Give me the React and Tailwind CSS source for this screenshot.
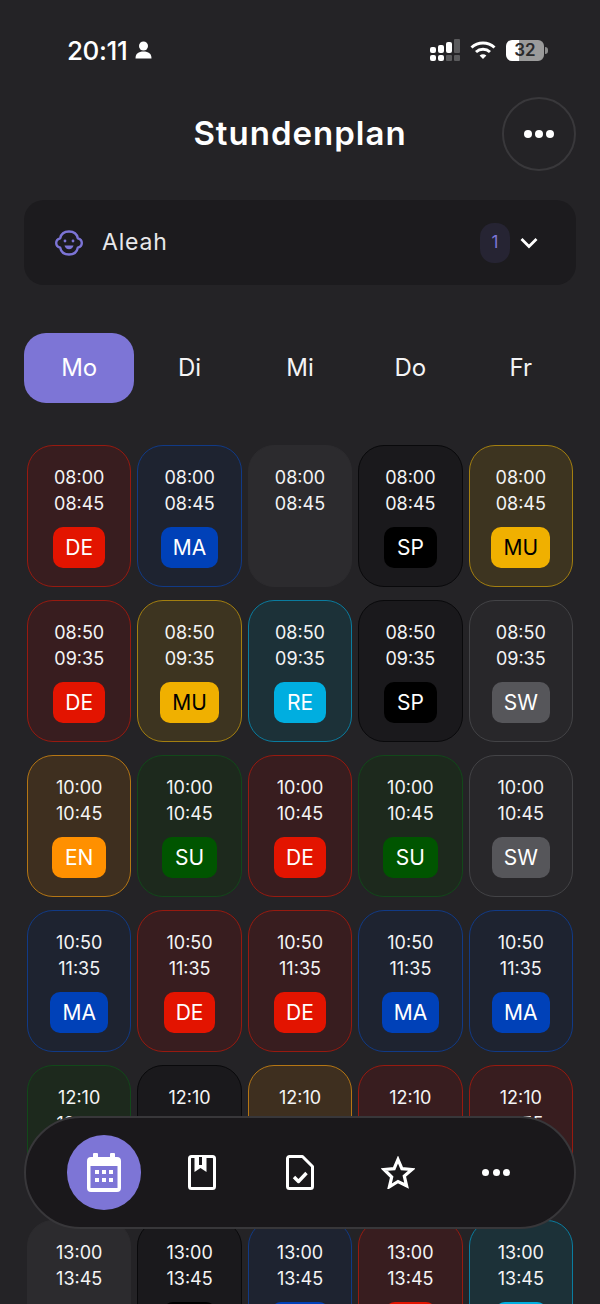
import React from "react";

const SUBJECTS = {
  DE: { card: "bg-[#381d1f] border-[#971a10]", badge: "bg-[#e31400] text-white px-[12px]" },
  MA: { card: "bg-[#1e2330] border-[#113a86]", badge: "bg-[#0041b8] text-white px-[12px]" },
  MU: { card: "bg-[#3d3420] border-[#a37f10]", badge: "bg-[#f0b000] text-black px-[12px]" },
  RE: { card: "bg-[#1c3138] border-[#0a7c9f]", badge: "bg-[#00aee0] text-white px-[13px]" },
  SP: { card: "bg-[#1a191c] border-[#09090b]", badge: "bg-black text-white px-[13px]" },
  SW: { card: "bg-[#28272a] border-[#434346]", badge: "bg-[#56565a] text-white px-[12px]" },
  EN: { card: "bg-[#3e2f1f] border-[#b57614]", badge: "bg-[#ff9000] text-white px-[13px]" },
  SU: { card: "bg-[#1d291d] border-[#12481a]", badge: "bg-[#005500] text-white px-[13px]" },
};

const ROWS = [
  { from: "08:00", to: "08:45", subjects: ["DE", "MA", null, "SP", "MU"] },
  { from: "08:50", to: "09:35", subjects: ["DE", "MU", "RE", "SP", "SW"] },
  { from: "10:00", to: "10:45", subjects: ["EN", "SU", "DE", "SU", "SW"] },
  { from: "10:50", to: "11:35", subjects: ["MA", "DE", "DE", "MA", "MA"] },
  { from: "12:10", to: "12:55", subjects: ["SU", "SP", "EN", "DE", "DE"] },
  { from: "13:00", to: "13:45", subjects: [null, "SP", "MA", "DE", "RE"] },
];

const DAYS = ["Mo", "Di", "Mi", "Do", "Fr"];

function LessonCard({ from, to, subject }) {
  const style = subject ? SUBJECTS[subject] : null;
  return (
    <div
      className={`h-[142px] rounded-[26px] border pt-[19px] flex flex-col items-center ${
        style ? style.card : "bg-[#2c2b2e] border-[#2c2b2e]"
      }`}
    >
      <div className="text-[18px] leading-[26px] text-[#f4f4f5] text-center">
        <div>{from}</div>
        <div>{to}</div>
      </div>
      {subject && (
        <div
          className={`mt-[10px] h-[41px] rounded-[10px] flex items-center justify-center text-[21px] ${style.badge}`}
        >
          {subject}
        </div>
      )}
    </div>
  );
}

function Dots({ size = 7, gap = "gap-[3px]" }) {
  return (
    <div className={`flex ${gap}`}>
      {[0, 1, 2].map((i) => (
        <span key={i} className="rounded-full bg-white" style={{ width: size, height: size }} />
      ))}
    </div>
  );
}

function StatusBar() {
  return (
    <div className="h-[40px] mt-[30px] pl-[67px] pr-[52px] flex items-center justify-between">
      <div className="flex items-center gap-[8px]">
        <span className="text-[26px] font-medium text-white tracking-[-0.4px]">20:11</span>
        <svg width="17" height="18" viewBox="0 0 17 18" fill="white">
          <circle cx="8.5" cy="5" r="4.5" />
          <path d="M0.5 17.5c0-5 3-7 8-7s8 2 8 7z" />
        </svg>
      </div>
      <div className="flex items-center">
        <svg width="30" height="22" viewBox="0 0 30 22" className="mr-[10px]">
          <g fill="white">
            <rect x="0" y="8" width="6" height="6" rx="2" />
            <rect x="0" y="16" width="6" height="6" rx="2" />
            <rect x="8" y="6" width="6" height="8" rx="2" />
            <rect x="8" y="16" width="6" height="6" rx="2" />
            <rect x="16" y="3" width="6" height="11" rx="2" />
          </g>
          <g fill="#5a5a5c">
            <rect x="16" y="16" width="6" height="6" rx="1" />
            <rect x="24" y="0" width="6" height="14" rx="1" />
            <rect x="24" y="16" width="6" height="6" rx="1" />
          </g>
        </svg>
        <svg width="26" height="20" viewBox="0 0 26 20" className="mr-[10px]" fill="none" stroke="white" strokeWidth="3">
          <path d="M1.5 7.5c6.5-6 16.5-6 23 0" />
          <path d="M6 12c4-3.6 10-3.6 14 0" />
          <path d="M13 19l-3.4-3.6c2-1.6 4.8-1.6 6.8 0z" fill="white" stroke="none" />
        </svg>
        <div className="w-[38px] h-[21px] rounded-[6px] bg-[linear-gradient(90deg,#ffffff_0_33%,#9b9b9b_33%)] flex items-center justify-center text-[17px] font-semibold leading-none text-[#2a2a2c]">
          32
        </div>
        <span className="ml-[1px] w-[3px] h-[7px] rounded-r-full bg-[#8d8d8d]" />
      </div>
    </div>
  );
}

function BabyIcon() {
  return (
    <svg width="28" height="26" viewBox="0 0 28 26" fill="none" stroke="#7c74d6" strokeWidth="2.4" strokeLinejoin="round">
      <path d="M14 1.5c4.5 0 8 2.6 8.8 6.8 2.6.7 4 2.5 4 4.7s-1.4 4-4 4.7c-.8 4.2-4.3 6.8-8.8 6.8s-8-2.6-8.8-6.8c-2.6-.7-4-2.5-4-4.7s1.4-4 4-4.7C6 4.1 9.500 1.500 14 1.500z" />
      <circle cx="10" cy="11" r="1.400" fill="#7c74d6" stroke="none" />
      <circle cx="18" cy="11" r="1.400" fill="#7c74d6" stroke="none" />
      <path d="M9.500 15.500h9c-.6 2.400-2.300 3.700-4.500 3.700s-3.900-1.300-4.500-3.700z" fill="#7c74d6" stroke="none" />
    </svg>
  );
}

function BottomNav() {
  return (
    <div className="absolute left-[24px] top-[1116px] w-[552px] h-[113px] rounded-full bg-[#1a181b] border-2 border-[#38373a] pl-[41px] flex items-center">
      <div className="w-[74px] h-[75px] rounded-full bg-[#7d75d6] flex items-center justify-center">
        <svg width="34" height="39" viewBox="0 0 34 39">
          <path
            fill="white"
            d="M7 0h3a1 1 0 0 1 1 1v3h12V1a1 1 0 0 1 1-1h3a1 1 0 0 1 1 1v3h2a4 4 0 0 1 4 4v27a4 4 0 0 1-4 4H4a4 4 0 0 1-4-4V8a4 4 0 0 1 4-4h2V1a1 1 0 0 1 1-1z"
          />
          <rect x="3.500" y="13" width="27" height="22" fill="#7d75d6" />
          <g fill="white">
            <rect x="8" y="17" width="4" height="4" />
            <rect x="15" y="17" width="4" height="4" />
            <rect x="22" y="17" width="4" height="4" />
            <rect x="8" y="25" width="4" height="4" />
            <rect x="15" y="25" width="4" height="4" />
            <rect x="22" y="25" width="4" height="4" />
          </g>
        </svg>
      </div>
      <div className="w-[98px] ml-[12px] flex justify-center">
        <svg width="28" height="35" viewBox="0 0 28 35" fill="none" stroke="white" strokeWidth="3">
          <rect x="1.500" y="1.500" width="25" height="32" rx="2" />
          <path d="M6.500 2v15l6-4 6 4V2z" fill="white" stroke="none" />
          <path d="M12.500 2v8" stroke="#1a181b" strokeWidth="3" />
        </svg>
      </div>
      <div className="w-[98px] flex justify-center">
        <svg width="28" height="35" viewBox="0 0 28 35" fill="none" stroke="white" strokeWidth="3" strokeLinejoin="round">
          <path d="M3.500 1.500h13l10 10v20a2 2 0 0 1-2 2h-21a2 2 0 0 1-2-2v-28a2 2 0 0 1 2-2z" />
          <path d="M8 22l4.500 4.500 8-8.500" strokeWidth="3.400" />
        </svg>
      </div>
      <div className="w-[98px] flex justify-center">
        <svg width="34" height="33" viewBox="0 0 34 33" fill="none" stroke="white" strokeWidth="3.200" strokeLinejoin="miter">
          <path d="M17 3.500l3.900 9.200 10 .8-7.600 6.500 2.300 9.800L17 25.500l-8.600 5.300 2.300-9.800L3.100 13.500l10-.8z" />
        </svg>
      </div>
      <div className="w-[98px] flex justify-center">
        <Dots size={7} gap="gap-[3.500px]" />
      </div>
    </div>
  );
}

export default function App() {
  return (
    <div
      className="relative w-[600px] h-[1304px] overflow-hidden bg-[#242326] text-white"
      style={{ fontFamily: "Inter, 'Liberation Sans', sans-serif" }}
    >
      <StatusBar />

      {/* Header */}
      <div className="relative mt-[27px] h-[74px] flex items-center justify-center">
        <h1 className="text-[33px] font-semibold text-white tracking-[1px]">Stundenplan</h1>
        <button className="absolute right-[24px] top-0 w-[74px] h-[74px] rounded-full border-2 border-[#39383b] flex items-center justify-center">
          <Dots size={8} gap="gap-[3px]" />
        </button>
      </div>

      {/* Child select */}
      <div className="mx-[24px] mt-[29px] h-[85px] rounded-[20px] bg-[#1c1b1e] pl-[31px] pr-[38px] flex items-center">
        <BabyIcon />
        <span className="ml-[19px] text-[23px] text-[#e8e8ea] tracking-[0.8px]">Aleah</span>
        <div className="ml-auto w-[30px] h-[40px] rounded-[14px] bg-[#262433] flex items-center justify-center text-[17px] text-[#7d75d6]">
          1
        </div>
        <svg width="18" height="12" viewBox="0 0 18 12" fill="none" stroke="white" strokeWidth="2.800" className="ml-[10px]">
          <path d="M1.500 2l7.500 7.500L16.500 2" />
        </svg>
      </div>

      {/* Days */}
      <div className="mx-[24px] mt-[48px] grid grid-cols-5">
        {DAYS.map((day, i) => (
          <div
            key={day}
            className={`h-[70px] rounded-[22px] flex items-center justify-center text-[24px] ${
              i === 0 ? "bg-[#7d75d6] text-white" : "text-[#f4f4f5]"
            }`}
          >
            {day}
          </div>
        ))}
      </div>

      {/* Timetable */}
      <div className="mx-[27px] mt-[42px] grid grid-cols-5 gap-x-[6px] gap-y-[13px]">
        {ROWS.map((row) =>
          row.subjects.map((subject, i) => (
            <LessonCard key={row.from + i} from={row.from} to={row.to} subject={subject} />
          ))
        )}
      </div>

      <BottomNav />
    </div>
  );
}
